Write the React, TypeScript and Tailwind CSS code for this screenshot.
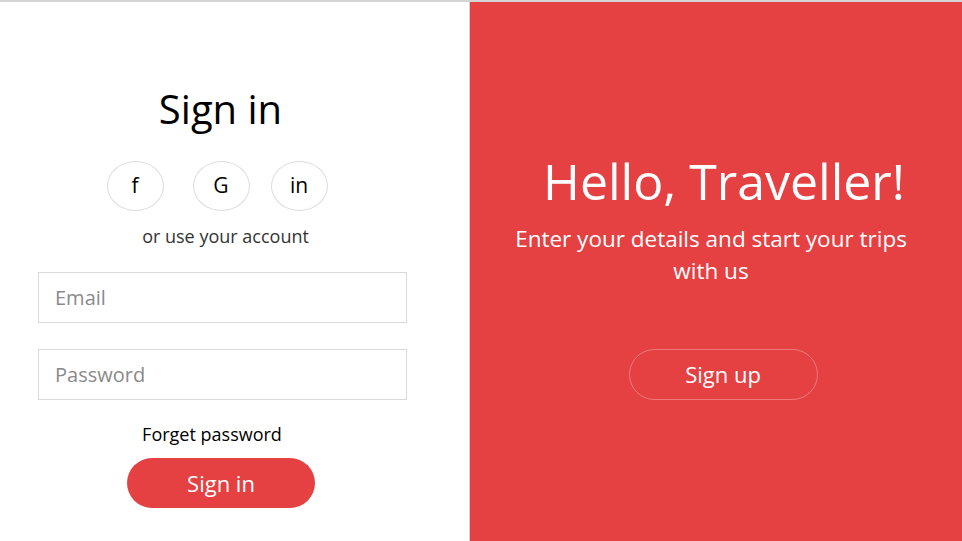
const FONT = { fontFamily: '"Open Sans", "Noto Sans", sans-serif' };

function SocialButton({ label, className }: { label: string; className?: string }) {
  return (
    <button
      className={`flex h-[50px] w-[57px] items-center justify-center rounded-[50%] border border-[#dcdcdc] bg-white text-[21px] text-black ${className ?? ''}`}
    >
      {label}
    </button>
  );
}

export default function App() {
  return (
    <div
      className="flex h-[541px] w-[962px] overflow-hidden border-t-2 border-[#d4d4d4] bg-white"
      style={FONT}
    >
      {/* Sign in form */}
      <div className="flex w-[469px] flex-col pl-[38px] pt-[82px]">
        <div className="flex w-[369px] flex-col items-center">
          <h1 className="mr-[4px] text-[40px] leading-[50px] text-black">Sign in</h1>
          <div className="mr-[11px] mt-[27px] flex items-center">
            <SocialButton label="f" className="mr-[29px]" />
            <SocialButton label="G" className="mr-[21px]" />
            <SocialButton label="in" />
          </div>
          <p className="ml-[6px] mt-[12px] text-[18px] leading-[26px] text-[#333]">or use your account</p>
          <input
            type="email"
            placeholder="Email"
            className="mt-[23px] h-[51px] w-[369px] border border-[#dadada] px-[16px] text-[20px] text-black outline-none placeholder:text-[#8a8a8a]"
          />
          <input
            type="password"
            placeholder="Password"
            className="mt-[26px] h-[51px] w-[369px] border border-[#dadada] px-[16px] text-[20px] text-black outline-none placeholder:text-[#8a8a8a]"
          />
          <a className="mr-[21px] mt-[21px] text-[18px] leading-[26px] text-black">Forget password</a>
          <button className="mr-[3px] mt-[11px] h-[50px] w-[188px] rounded-full bg-[#e54042] text-[22px] text-white">
            Sign in
          </button>
        </div>
      </div>

      {/* Welcome panel */}
      <div className="flex flex-1 flex-col items-center border-l border-[#d0d0d0] bg-[#e54042] pt-[146px] text-white">
        <h2 className="ml-[16px] text-[50px] leading-[66px]">Hello, Traveller!</h2>
        <p className="mr-[10px] mt-[9px] w-[420px] text-center text-[22.5px] leading-[32px]">
          Enter your details and start your trips with us
        </p>
        <button className="ml-[14px] mt-[62px] h-[51px] w-[189px] rounded-full border border-white/30 text-[22px] text-white">
          Sign up
        </button>
      </div>
    </div>
  );
}
